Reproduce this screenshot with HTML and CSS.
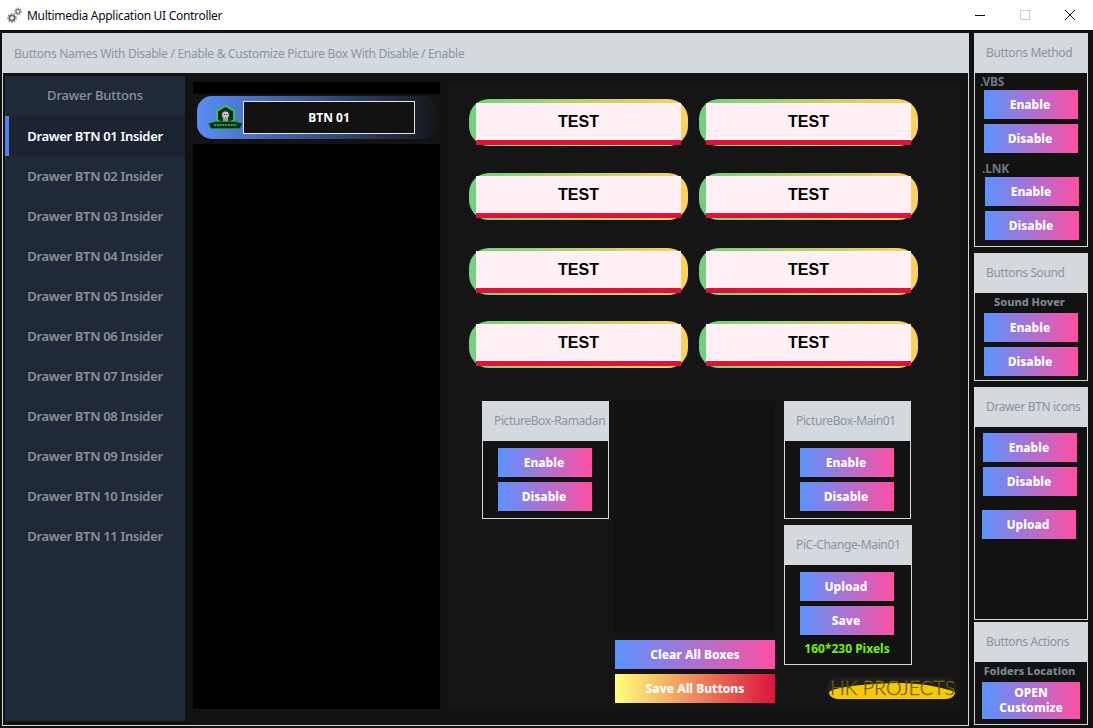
FILE: index.html
```html
<!DOCTYPE html>
<html lang="en">
<head>
    <meta charset="UTF-8">
    <meta name="viewport" content="width=device-width, initial-scale=1.0">
    <title>Multimedia Application UI Controller</title>
    <link rel="stylesheet" href="styles.css">
</head>
<body>
    <!-- Title bar -->
    <div class="titlebar">
        <svg class="app-icon" width="16" height="16" viewBox="0 0 16 16">
            <circle cx="5" cy="11" r="2.6" fill="none" stroke="#666" stroke-width="1.6"/>
            <circle cx="5" cy="11" r="4" fill="none" stroke="#888" stroke-width="1.6" stroke-dasharray="1.6 1.2"/>
            <circle cx="11" cy="4.5" r="2" fill="none" stroke="#777" stroke-width="1.4"/>
            <circle cx="11" cy="4.5" r="3.2" fill="none" stroke="#999" stroke-width="1.4" stroke-dasharray="1.4 1"/>
        </svg>
        <span class="app-title">Multimedia Application UI Controller</span>
        <div class="win-controls">
            <svg width="10" height="10" viewBox="0 0 10 10"><path d="M0 5.5H10" stroke="#111" stroke-width="1"/></svg>
            <svg width="10" height="10" viewBox="0 0 10 10"><rect x=".5" y=".5" width="9" height="9" fill="none" stroke="#ccc"/></svg>
            <svg width="10" height="10" viewBox="0 0 10 10"><path d="M0 0L10 10M10 0L0 10" stroke="#111" stroke-width="1"/></svg>
        </div>
    </div>

    <div class="window">
        <!-- Main area -->
        <div class="main">
            <div class="main-header">Buttons Names With Disable / Enable &amp; Customize Picture Box With Disable / Enable</div>
            <div class="main-body">
                <!-- Drawer -->
                <div class="drawer">
                    <div class="drawer-item drawer-title">Drawer Buttons</div>
                    <div class="drawer-item active">Drawer BTN 01 Insider</div>
                    <div class="drawer-item">Drawer BTN 02 Insider</div>
                    <div class="drawer-item">Drawer BTN 03 Insider</div>
                    <div class="drawer-item">Drawer BTN 04 Insider</div>
                    <div class="drawer-item">Drawer BTN 05 Insider</div>
                    <div class="drawer-item">Drawer BTN 06 Insider</div>
                    <div class="drawer-item">Drawer BTN 07 Insider</div>
                    <div class="drawer-item">Drawer BTN 08 Insider</div>
                    <div class="drawer-item">Drawer BTN 09 Insider</div>
                    <div class="drawer-item">Drawer BTN 10 Insider</div>
                    <div class="drawer-item">Drawer BTN 11 Insider</div>
                </div>

                <!-- Button list -->
                <div class="btn-list">
                    <div class="btn-row">
                        <div class="btn-pill">
                            <svg class="btn-logo" width="35" height="26" viewBox="0 0 35 26">
                                <path d="M17.5 1L26 6V15L17.5 20L9 15V6Z" fill="#0b1f14" stroke="#1fd04c" stroke-width="2"/>
                                <path d="M17.5 4L22.5 8V17H12.5V8Z" fill="#1a3a28"/>
                                <circle cx="17.5" cy="10" r="3.4" fill="#c4c8c6"/>
                                <rect x="15" y="12.5" width="5" height="4.5" fill="#9a9e9c"/>
                                <path d="M15.8 9.5h1M18.2 9.5h1" stroke="#222" stroke-width="1.2"/>
                                <path d="M0.5 18.5L8 16.5H27L34.5 18.5L32 23.5H3Z" fill="#0a2a18" stroke="#128a34"/>
                                <path d="M6 20H29" stroke="#35d45e" stroke-width="1.6" stroke-dasharray="2 .8"/>
                            </svg>
                            <div class="btn-name">BTN 01</div>
                        </div>
                    </div>
                </div>

                <!-- Content -->
                <div class="content">
                    <div class="test-grid">
                        <div class="test-btn"><div class="test-face">TEST</div></div>
                        <div class="test-btn"><div class="test-face">TEST</div></div>
                        <div class="test-btn"><div class="test-face">TEST</div></div>
                        <div class="test-btn"><div class="test-face">TEST</div></div>
                        <div class="test-btn"><div class="test-face">TEST</div></div>
                        <div class="test-btn"><div class="test-face">TEST</div></div>
                        <div class="test-btn"><div class="test-face">TEST</div></div>
                        <div class="test-btn"><div class="test-face">TEST</div></div>
                    </div>

                    <div class="lower">
                        <div class="panel pic-panel">
                            <div class="panel-head">PictureBox-Ramadan</div>
                            <div class="panel-body centered">
                                <button class="grad-btn">Enable</button>
                                <button class="grad-btn">Disable</button>
                            </div>
                        </div>

                        <div class="middle">
                            <div class="preview"></div>
                            <button class="wide-btn">Clear All Boxes</button>
                            <button class="wide-btn save">Save All Buttons</button>
                        </div>

                        <div class="right-stack">
                            <div class="panel pic-panel">
                                <div class="panel-head">PictureBox-Main01</div>
                                <div class="panel-body centered">
                                    <button class="grad-btn">Enable</button>
                                    <button class="grad-btn">Disable</button>
                                </div>
                            </div>
                            <div class="panel change-panel">
                                <div class="panel-head">PiC-Change-Main01</div>
                                <div class="panel-body centered">
                                    <button class="grad-btn">Upload</button>
                                    <button class="grad-btn">Save</button>
                                    <div class="pixels">160*230 Pixels</div>
                                </div>
                            </div>
                            <svg class="hk-logo" width="130" height="22" viewBox="0 0 130 22">
                                <rect width="130" height="22" rx="11" fill="#1e1e1e"/>
                                <path d="M2 15C6 11 30 7 70 6C96 6 118 11 128 15C128 19 124 22 119 22H11C6 22 2 19 2 15Z" fill="#f7c808"/>
                                <text class="hk-text" x="3" y="18" textLength="125" lengthAdjust="spacingAndGlyphs">HK PROJECTS</text>
                            </svg>
                        </div>
                    </div>
                </div>
            </div>
        </div>

        <!-- Right column -->
        <div class="side">
            <div class="panel side-method">
                <div class="panel-head">Buttons Method</div>
                <div class="panel-body">
                    <div class="side-label">.VBS</div>
                    <button class="grad-btn m-9">Enable</button>
                    <button class="grad-btn m-9">Disable</button>
                    <div class="side-label lnk">.LNK</div>
                    <button class="grad-btn m-10">Enable</button>
                    <button class="grad-btn m-10">Disable</button>
                </div>
            </div>
            <div class="panel side-sound">
                <div class="panel-head">Buttons Sound</div>
                <div class="panel-body">
                    <div class="side-caption">Sound Hover</div>
                    <button class="grad-btn m-9">Enable</button>
                    <button class="grad-btn m-9">Disable</button>
                </div>
            </div>
            <div class="panel side-icons">
                <div class="panel-head">Drawer BTN icons</div>
                <div class="panel-body">
                    <button class="grad-btn m-8">Enable</button>
                    <button class="grad-btn m-8">Disable</button>
                    <button class="grad-btn m-7 upload">Upload</button>
                </div>
            </div>
            <div class="panel side-actions">
                <div class="panel-head">Buttons Actions</div>
                <div class="panel-body">
                    <div class="side-caption">Folders Location</div>
                    <button class="open-btn">OPEN<br>Customize</button>
                </div>
            </div>
        </div>
    </div>
</body>
</html>
```

FILE: styles.css
```css
* {
    box-sizing: border-box;
}
body {
    margin: 0;
    width: 1093px;
    height: 728px;
    overflow: hidden;
    background-color: #111;
    font-family: "Noto Sans", sans-serif;
}
.titlebar {
    display: flex;
    align-items: center;
    height: 30px;
    background-color: #fff;
    padding-left: 7px;
}
.app-title {
    margin-left: 4px;
    font-size: 12px;
    letter-spacing: -.3px;
    color: #0a0a1e;
}
.win-controls {
    display: flex;
    gap: 35px;
    margin-left: auto;
    margin-right: 18px;
}
.window {
    display: flex;
    gap: 5px;
    padding: 3px 5px 0 2px;
}

/* Main */
.main {
    width: 967px;
    height: 693px;
    border: 1px solid #d5d9dd;
    background-color: #121212;
}
.main-header {
    display: flex;
    align-items: center;
    height: 39px;
    padding-left: 11px;
    background-color: #d4d9dd;
    color: #8a94a2;
    font-size: 12px;
    letter-spacing: -.28px;
}
.main-body {
    display: flex;
    padding: 3px 0 0 2px;
}
.drawer {
    width: 180px;
    height: 645px;
    background-color: #202938;
}
.drawer-item {
    height: 40px;
    line-height: 40px;
    text-align: center;
    font-size: 13px;
    font-weight: 600;
    letter-spacing: -.33px;
    color: #8d9197;
}
.drawer-title {
    line-height: 38px;
    font-weight: 500;
    letter-spacing: -.15px;
}
.drawer-item.active {
    background-color: #1c2431;
    border-left: 4px solid #4f7ff2;
    color: #fff;
    padding-right: 4px;
}
.btn-list {
    width: 247px;
    height: 627px;
    margin: 6px 0 0 8px;
    padding-top: 12px;
    background-color: #000;
}
.btn-row {
    height: 50px;
    padding: 2px 3px 5px 4px;
    background-color: #131313;
}
.btn-pill {
    display: flex;
    align-items: center;
    height: 43px;
    padding-left: 11px;
    border-radius: 15px;
    background: linear-gradient(90deg, #5b8cf5, #15161a);
}
.btn-logo {
    flex: none;
}
.btn-name {
    width: 172px;
    height: 33px;
    line-height: 31px;
    border: 1px solid #e4e4e4;
    background-color: #121212;
    color: #fff;
    font-size: 12px;
    font-weight: 700;
    text-align: center;
}
.content {
    width: 512px;
    height: 627px;
    margin: 6px 0 0 8px;
    padding: 17px 0 0 21px;
    background-color: #151515;
}
.test-grid {
    display: grid;
    grid-template-columns: 219px 219px;
    grid-template-rows: 74px 75px 73px 47px;
    column-gap: 11px;
}
.test-btn {
    height: 47px;
    padding: 3px 7px 2px;
    border-radius: 20px;
    background: linear-gradient(90deg, #6fd17f, #ffd25a);
}
.test-btn:nth-child(-n+2) {
    padding-top: 4px;
}
.test-face {
    height: 42px;
    line-height: 37px;
    border-bottom: 5px solid #dc143c;
    background-color: #fff0f5;
    color: #000;
    font-family: "Liberation Sans", Arial, sans-serif;
    font-size: 16px;
    font-weight: 700;
    text-align: center;
}
.lower {
    display: flex;
    margin: 33px 0 0 13px;
}

/* Panels */
.panel {
    display: flex;
    flex-direction: column;
    border: 1px solid #d5d9dd;
    background-color: #121212;
}
.panel-head {
    flex: none;
    height: 39px;
    line-height: 38px;
    padding-left: 11px;
    background-color: #d4d9dd;
    color: #8a94a2;
    font-size: 12px;
    letter-spacing: -.38px;
    white-space: nowrap;
}
.panel-body.centered {
    display: flex;
    flex-direction: column;
    align-items: center;
    padding: 7px 1px 0 0;
}
.pic-panel {
    width: 127px;
    height: 118px;
}
.change-panel {
    width: 128px;
    height: 140px;
    margin-top: 6px;
}
.change-panel .panel-body.centered {
    padding-right: 2px;
}
.grad-btn,
.wide-btn,
.open-btn {
    display: block;
    border: 0;
    padding: 0;
    color: #fff;
    font-family: "Noto Sans", sans-serif;
    font-weight: 800;
    background: linear-gradient(90deg, #5b93ff, #ff4fa3);
}
.grad-btn {
    width: 94px;
    height: 29px;
    margin-bottom: 5px;
    padding-right: 2px;
    font-size: 12px;
}
.middle {
    width: 160px;
    margin-left: 6px;
}
.preview {
    height: 233px;
    background-color: #111;
}
.wide-btn {
    width: 160px;
    height: 29px;
    margin-top: 5px;
    font-size: 12px;
}
.preview + .wide-btn {
    margin-top: 6px;
}
.wide-btn.save {
    background: linear-gradient(90deg, #ffff7a, #dc143c);
}
.right-stack {
    width: 128px;
    margin-left: 9px;
}
.pixels {
    color: #74f012;
    font-size: 12px;
    font-weight: 700;
}
.hk-logo {
    display: block;
    margin: 12px 0 0 43px;
    overflow: visible;
}
.hk-text {
    font-family: "Lato", sans-serif;
    font-size: 19px;
    font-weight: 300;
    fill: #2e2804;
    stroke: #a08c10;
    stroke-width: .35;
}

/* Right column */
.side {
    width: 114px;
    display: flex;
    flex-direction: column;
}
.side-method {
    height: 214px;
}
.side-sound {
    height: 128px;
    margin-top: 6px;
}
.side-icons {
    height: 233px;
    margin-top: 6px;
}
.side-actions {
    height: 103px;
    margin-top: 2px;
}
.side-label {
    height: 15px;
    line-height: 15px;
    margin: 1px 0;
    padding-left: 5px;
    color: #6e7784;
    font-size: 12px;
    font-weight: 700;
    letter-spacing: -.2px;
}
.side-label.lnk {
    margin-top: 8px;
    padding-left: 7px;
}
.side-caption {
    height: 15px;
    line-height: 15px;
    margin: 1px 0 4px;
    padding-right: 3px;
    color: #7d8691;
    font-size: 11px;
    font-weight: 800;
    text-align: center;
}
.m-7 { margin-left: 7px; }
.m-8 { margin-left: 8px; }
.m-9 { margin-left: 9px; }
.m-10 { margin-left: 10px; }
.side-icons .panel-body {
    padding-top: 6px;
}
.upload {
    margin-top: 14px;
}
.open-btn {
    width: 98px;
    height: 37px;
    margin-left: 7px;
    padding-bottom: 2px;
    font-size: 12px;
    line-height: 15px;
}
```
